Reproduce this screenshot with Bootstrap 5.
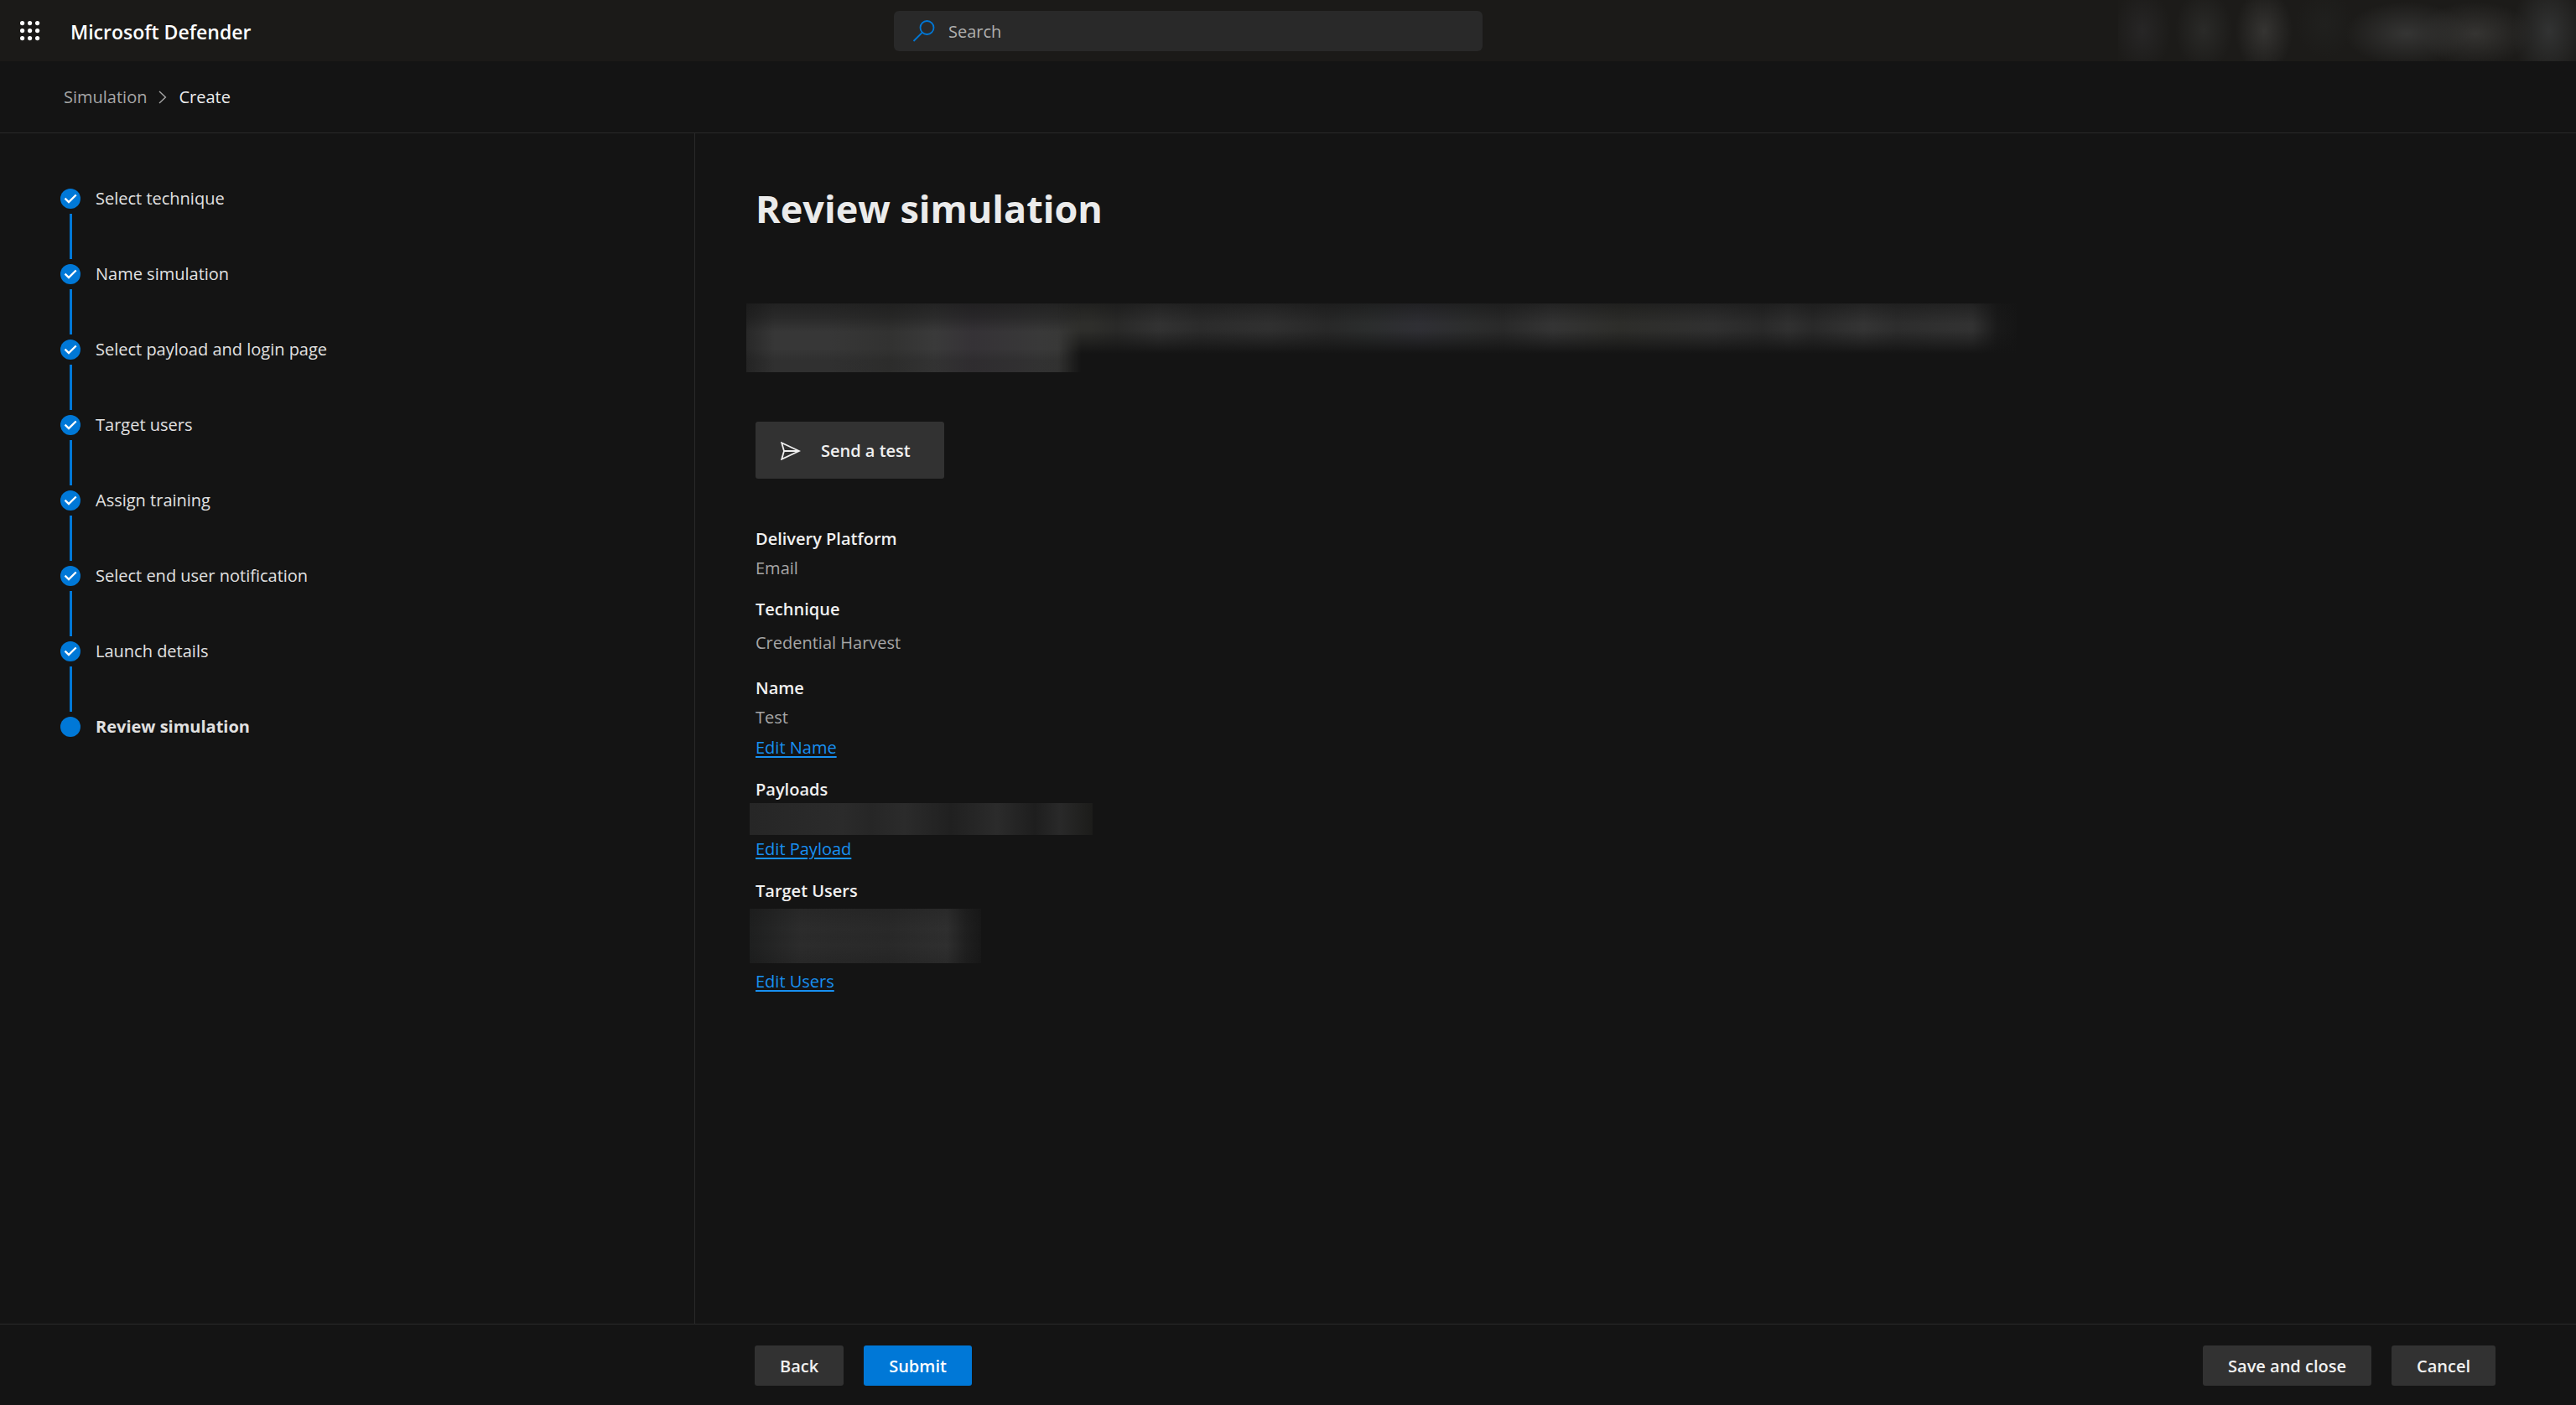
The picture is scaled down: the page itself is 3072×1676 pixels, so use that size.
<!DOCTYPE html>
<html lang="en" data-bs-theme="dark">
<head>
<meta charset="utf-8">
<meta name="viewport" content="width=device-width, initial-scale=1">
<title>Review simulation - Microsoft Defender</title>
<link href="https://cdn.jsdelivr.net/npm/bootstrap@5.3.0/dist/css/bootstrap.min.css" rel="stylesheet">
<style>
  body { background: #141414; color: #ebebeb; font-family: "Open Sans", "Noto Sans", sans-serif; font-size: 20px; line-height: 30px; }
  .suite-bar { display: grid; grid-template-columns: 1066fr 702fr 1304fr; height: 73px; background: #1b1a18; }
  .launcher { width: 24px; height: 24px; margin-left: 24px; margin-right: 36px; }
  .launcher svg, .step-dot svg { display: block; }
  .brand { color: #fff; font-size: 23px; font-weight: 600; line-height: 32px; margin-top: 2px; }
  .search-box { height: 48px; background: #292929; border-radius: 6px; padding: 0 22px; gap: 16px; }
  .search-box input { background: transparent; border: 0; color: #b0b0b0; outline: 0; padding: 2px 0 0; line-height: 30px; }
  .search-box input::placeholder { color: #b0b0b0; opacity: 1; }
  .account-haze { width: 546px; background:
      radial-gradient(34px 50px at 29px 37px, #272626, transparent),
      radial-gradient(34px 48px at 102px 36px, #2a2a28, transparent),
      radial-gradient(34px 50px at 174px 37px, #353432, transparent),
      radial-gradient(34px 40px at 246px 29px, #20201e, transparent),
      radial-gradient(74px 38px at 344px 40px, #353534, transparent),
      radial-gradient(68px 38px at 426px 40px, #353432, transparent),
      radial-gradient(44px 64px at 514px 37px, #323333, transparent), #1c1b19; }
  .crumbs { height: 86px; padding: 0 76px; border-bottom: 1px solid #292929; gap: 14px; }
  .crumbs a { color: #a6a6a6; text-decoration: none; }
  .steps-pane { width: 829px; padding: 66px 72px 0; border-right: 1px solid #292929; }
  .step-item { gap: 18px; height: 90px; color: #e1e1e1; }
  .step-dot { width: 24px; }
  .step-dot i { width: 24px; height: 24px; border-radius: 50%; background: #0078d7; margin-bottom: 6px; }
  .step-line { width: 3px; height: 54px; background: #0078d7; }
  .step-text { line-height: 24px; color: inherit; text-decoration: none; }
  .review { padding: 64px 72px 48px; }
  .review h1 { font-size: 45px; font-weight: 700; line-height: 52px; margin: 0 0 87px; color: #ebebeb; }
  .haze-intro { max-width: 1515px; height: 82px; margin: 0 0 59px -11px; }
  .haze-lead { width: 402px; z-index: 1;
    -webkit-mask-image: linear-gradient(90deg, #000 372px, transparent 400px); mask-image: linear-gradient(90deg, #000 372px, transparent 400px);
    background:
      linear-gradient(180deg, #14141499, #14141466 16px, transparent 34px 54px, #14141433 68px),
      linear-gradient(90deg, #282828, #373737 34px 100px, #323231 170px, #3a3a3a 225px, #353236 270px, #393939 350px, #373735 402px); }
  .haze-tail { margin-left: -50px; background:
      linear-gradient(180deg, #14141488, transparent 24px 32px, #141414 60px),
      linear-gradient(90deg, #2e2e2c, #2e2e2b 60px, #292928 90px, #323232 140px, #2b2b2b 190px, #303030 270px, #282828 340px, #2b2d2d 390px, #2f2f34 450px, #2c2d2d 510px, #292929 550px, #343434 610px, #2d2d2a 690px, #303030 800px, #292929 860px, #303030 890px, #292929 920px, #343434 980px, #2d2d2d 1020px, #323232 1110px, #191919 1140px, #151515); }
  .btn { --bs-btn-font-size: 20px; --bs-btn-font-weight: 600; --bs-btn-line-height: 30px; --bs-btn-border-width: 0; --bs-btn-border-radius: 3px; --bs-btn-color: #f0f0f0; --bs-btn-bg: #323232; --bs-btn-hover-bg: #3c3c3c; --bs-btn-hover-color: #fff; padding: 10px 30px 8px; white-space: nowrap; }
  .btn-submit { --bs-btn-color: #fff; --bs-btn-bg: #0078d7; --bs-btn-hover-bg: #1a86db; }
  .btn-test { width: 225px; height: 68px; gap: 24px; }
  .facts { margin: 54px 0 0; line-height: 35px; }
  .facts dt { font-weight: 600; color: #f0f0f0; }
  .facts dd { margin: 0; color: #a6a6a6; }
  .facts .fact { margin-bottom: 14px; }
  .facts .spaced { padding: 5px 0; }
  .facts a { display: block; width: max-content; line-height: 37px; color: #1890f1; text-decoration-thickness: 2px; text-underline-offset: 3px; }
  .haze-payload { width: 409px; height: 38px; margin: -1px 0 -2px -7px; background: linear-gradient(90deg, #262626, #2b2b2b 110px, #262626 145px, #2b2b2b 185px, #202020 240px, #2b2b2b 295px, #1e1e1e 340px, #292929 370px, #1c1c1a); }
  .haze-users { width: 276px; height: 65px; margin: 4px 0 3px -7px; background:
      linear-gradient(180deg, #14141433, transparent 24px, #14141411 34px, transparent 44px, #14141433),
      linear-gradient(90deg, #1e1f1f, #2c2c2c 60px, #292929 165px, #2f2f2f 235px, #1f1f1f 258px, #181818); }
  .action-bar { height: 97px; border-top: 1px solid #292929; padding: 1px 96px 0 900px; gap: 24px; }
</style>
</head>
<body class="d-flex flex-column min-vh-100">
<header class="suite-bar">
  <div class="d-flex align-items-center">
    <button class="launcher border-0 bg-transparent p-0" type="button" aria-label="App launcher">
      <svg width="24" height="24" viewBox="0 0 24 24" fill="#fff"><circle cx="2.6" cy="2.6" r="2.6"/><circle cx="11.6" cy="2.6" r="2.6"/><circle cx="20.6" cy="2.6" r="2.6"/><circle cx="2.6" cy="11.6" r="2.6"/><circle cx="11.6" cy="11.6" r="2.6"/><circle cx="20.6" cy="11.6" r="2.6"/><circle cx="2.6" cy="20.6" r="2.6"/><circle cx="11.6" cy="20.6" r="2.6"/><circle cx="20.6" cy="20.6" r="2.6"/></svg>
    </button>
    <span class="brand">Microsoft Defender</span>
  </div>
  <div class="d-flex align-items-center">
    <label class="search-box d-flex align-items-center w-100">
      <svg width="27" height="26" viewBox="0 0 27 26" fill="none" stroke="#0078d7" stroke-width="1.8"><circle cx="17.5" cy="9" r="8"/><path d="M11.7 14.8 1.5 25"/></svg>
      <input class="flex-grow-1" type="text" placeholder="Search" aria-label="Search">
    </label>
  </div>
  <div class="d-flex justify-content-end"><div class="account-haze" aria-hidden="true"></div></div>
</header>
<nav class="crumbs d-flex align-items-center" aria-label="Breadcrumb">
  <a href="#">Simulation</a>
  <svg width="10" height="16" viewBox="0 0 10 16" fill="none" stroke="#a6a6a6" stroke-width="1.4"><path d="M1 1l7.4 7L1 15"/></svg>
  <span aria-current="page">Create</span>
</nav>
<div class="d-flex flex-grow-1">
  <aside class="steps-pane flex-shrink-0">
    <div class="step-item d-flex"><div class="step-dot d-flex flex-column align-items-center"><i><svg width="24" height="24" viewBox="0 0 24 24" fill="none" stroke="#fff" stroke-width="2.4"><path d="M5.5 11.6 10 16l8.7-8.5"/></svg></i><span class="step-line"></span></div><a class="step-text" href="#">Select technique</a></div>
    <div class="step-item d-flex"><div class="step-dot d-flex flex-column align-items-center"><i><svg width="24" height="24" viewBox="0 0 24 24" fill="none" stroke="#fff" stroke-width="2.4"><path d="M5.5 11.6 10 16l8.7-8.5"/></svg></i><span class="step-line"></span></div><a class="step-text" href="#">Name simulation</a></div>
    <div class="step-item d-flex"><div class="step-dot d-flex flex-column align-items-center"><i><svg width="24" height="24" viewBox="0 0 24 24" fill="none" stroke="#fff" stroke-width="2.4"><path d="M5.5 11.6 10 16l8.7-8.5"/></svg></i><span class="step-line"></span></div><a class="step-text" href="#">Select payload and login page</a></div>
    <div class="step-item d-flex"><div class="step-dot d-flex flex-column align-items-center"><i><svg width="24" height="24" viewBox="0 0 24 24" fill="none" stroke="#fff" stroke-width="2.4"><path d="M5.5 11.6 10 16l8.7-8.5"/></svg></i><span class="step-line"></span></div><a class="step-text" href="#">Target users</a></div>
    <div class="step-item d-flex"><div class="step-dot d-flex flex-column align-items-center"><i><svg width="24" height="24" viewBox="0 0 24 24" fill="none" stroke="#fff" stroke-width="2.4"><path d="M5.5 11.6 10 16l8.7-8.5"/></svg></i><span class="step-line"></span></div><a class="step-text" href="#">Assign training</a></div>
    <div class="step-item d-flex"><div class="step-dot d-flex flex-column align-items-center"><i><svg width="24" height="24" viewBox="0 0 24 24" fill="none" stroke="#fff" stroke-width="2.4"><path d="M5.5 11.6 10 16l8.7-8.5"/></svg></i><span class="step-line"></span></div><a class="step-text" href="#">Select end user notification</a></div>
    <div class="step-item d-flex"><div class="step-dot d-flex flex-column align-items-center"><i><svg width="24" height="24" viewBox="0 0 24 24" fill="none" stroke="#fff" stroke-width="2.4"><path d="M5.5 11.6 10 16l8.7-8.5"/></svg></i><span class="step-line"></span></div><a class="step-text" href="#">Launch details</a></div>
    <div class="step-item d-flex"><div class="step-dot"><i class="d-block"></i></div><a class="step-text fw-bold" href="#" aria-current="step">Review simulation</a></div>
  </aside>
  <main class="review flex-grow-1">
    <h1>Review simulation</h1>
    <div class="haze-intro d-flex" aria-hidden="true"><div class="haze-lead position-relative flex-shrink-0"></div><div class="haze-tail flex-grow-1"></div></div>
    <button class="btn btn-test d-flex align-items-center" type="button">
      <svg width="24" height="22" viewBox="0 0 24 22" fill="none" stroke="#f0f0f0" stroke-width="1.8"><path d="M1.2 1.2 22 11 1.2 20.8 4 11zM4 11h17"/></svg>
      Send a test
    </button>
    <dl class="facts">
      <div class="fact"><dt>Delivery Platform</dt><dd>Email</dd></div>
      <div class="fact"><dt>Technique</dt><dd class="spaced">Credential Harvest</dd></div>
      <div class="fact"><dt>Name</dt><dd>Test</dd><dd><a href="#">Edit Name</a></dd></div>
      <div class="fact"><dt>Payloads</dt><dd><div class="haze-payload" aria-hidden="true"></div></dd><dd><a href="#">Edit Payload</a></dd></div>
      <div class="fact"><dt>Target Users</dt><dd><div class="haze-users" aria-hidden="true"></div></dd><dd><a href="#">Edit Users</a></dd></div>
    </dl>
  </main>
</div>
<footer class="action-bar d-flex align-items-center">
  <button class="btn" type="button">Back</button>
  <button class="btn btn-submit" type="submit">Submit</button>
  <button class="btn ms-auto" type="button">Save and close</button>
  <button class="btn" type="button">Cancel</button>
</footer>
<script src="https://cdn.jsdelivr.net/npm/bootstrap@5.3.0/dist/js/bootstrap.bundle.min.js"></script>
</body>
</html>
